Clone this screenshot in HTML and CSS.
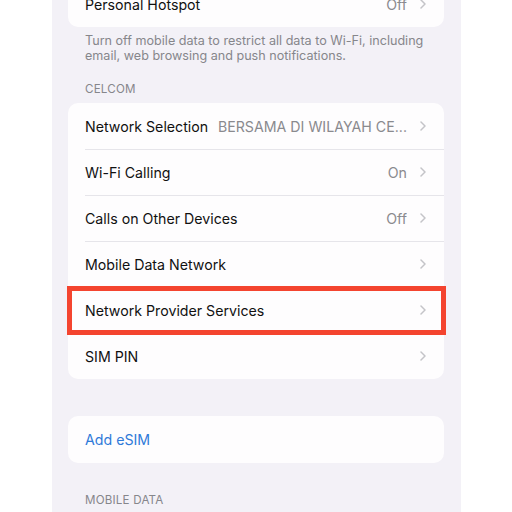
FILE: index.html
```html
<!DOCTYPE html>
<html>
<head>
<meta charset="utf-8">
<link rel="stylesheet" href="styles.css">
</head>
<body>
<div class="panel">
  <div class="card card-top">
    <div class="row">
      <span class="label">Personal Hotspot</span>
      <span class="value">Off</span>
      <svg class="chev" viewBox="0 0 6 10"><path d="M1 1 L5 5 L1 9"/></svg>
    </div>
  </div>
  <p class="footer">Turn off mobile data to restrict all data to Wi-Fi, including email, web browsing and push notifications.</p>

  <div class="header">CELCOM</div>
  <div class="card">
    <div class="row">
      <span class="label">Network Selection</span>
      <span class="value value-long">BERSAMA DI WILAYAH CE...</span>
      <svg class="chev" viewBox="0 0 6 10"><path d="M1 1 L5 5 L1 9"/></svg>
    </div>
    <div class="row">
      <span class="label">Wi-Fi Calling</span>
      <span class="value">On</span>
      <svg class="chev" viewBox="0 0 6 10"><path d="M1 1 L5 5 L1 9"/></svg>
    </div>
    <div class="row">
      <span class="label">Calls on Other Devices</span>
      <span class="value">Off</span>
      <svg class="chev" viewBox="0 0 6 10"><path d="M1 1 L5 5 L1 9"/></svg>
    </div>
    <div class="row">
      <span class="label">Mobile Data Network</span>
      <span class="value"></span>
      <svg class="chev" viewBox="0 0 6 10"><path d="M1 1 L5 5 L1 9"/></svg>
    </div>
    <div class="row highlighted">
      <span class="label">Network Provider Services</span>
      <span class="value"></span>
      <svg class="chev" viewBox="0 0 6 10"><path d="M1 1 L5 5 L1 9"/></svg>
    </div>
    <div class="row">
      <span class="label">SIM PIN</span>
      <span class="value"></span>
      <svg class="chev" viewBox="0 0 6 10"><path d="M1 1 L5 5 L1 9"/></svg>
    </div>
  </div>

  <div class="card card-esim">
    <div class="row">
      <span class="label link">Add eSIM</span>
    </div>
  </div>

  <div class="header header-mobile">MOBILE DATA</div>
</div>
</body>
</html>
```

FILE: styles.css
```css
html, body {
  margin: 0;
  padding: 0;
  background: #ffffff;
}
body {
  font-family: Inter, "Noto Sans", sans-serif;
  -webkit-font-smoothing: antialiased;
}
.panel {
  width: 409px;
  height: 512px;
  margin-left: 52px;
  background: #f3f1f7;
  overflow: hidden;
  display: flow-root;
}
.card {
  margin: 0 17px 0 16px;
  background: #fefdfe;
  border-radius: 10px;
}
.card-top {
  margin-top: -19px;
}
.row {
  position: relative;
  height: 46px;
  display: flex;
  align-items: center;
  padding: 0 18px 0 17px;
  font-size: 14.2px;
  color: #111;
}
.row + .row::before {
  content: "";
  position: absolute;
  top: 0;
  left: 17px;
  right: 0;
  height: 1px;
  background: #e6e5ea;
}
.label {
  flex: 0 0 auto;
  white-space: nowrap;
}
.value {
  flex: 1 1 auto;
  text-align: right;
  color: #8a8a8e;
  white-space: nowrap;
  overflow: hidden;
  margin-right: 13px;
}
.value-long {
  margin-left: 8px;
}
.chev {
  flex: 0 0 auto;
  width: 6px;
  height: 10px;
  fill: none;
  stroke: #c4c4c8;
  stroke-width: 1.5;
  stroke-linecap: round;
  stroke-linejoin: round;
}
.highlighted::after {
  content: "";
  position: absolute;
  top: -1px;
  bottom: -2px;
  left: -1px;
  right: -2px;
  border: 5px solid #f4442f;
  z-index: 2;
}
.footer {
  margin: 0;
  padding: 7px 28px 0 33px;
  font-size: 12.6px;
  line-height: 14.5px;
  color: #86868b;
}
.header {
  margin-top: 19px;
  padding: 0 0 7px 33px;
  font-size: 11.6px;
  line-height: 14px;
  color: #86868b;
  letter-spacing: 0.2px;
}
.card-esim {
  margin-top: 37px;
}
.card-esim .row {
  height: 47px;
}
.link {
  color: #2f7ad9;
}
.header-mobile {
  margin-top: 30px;
}
```
